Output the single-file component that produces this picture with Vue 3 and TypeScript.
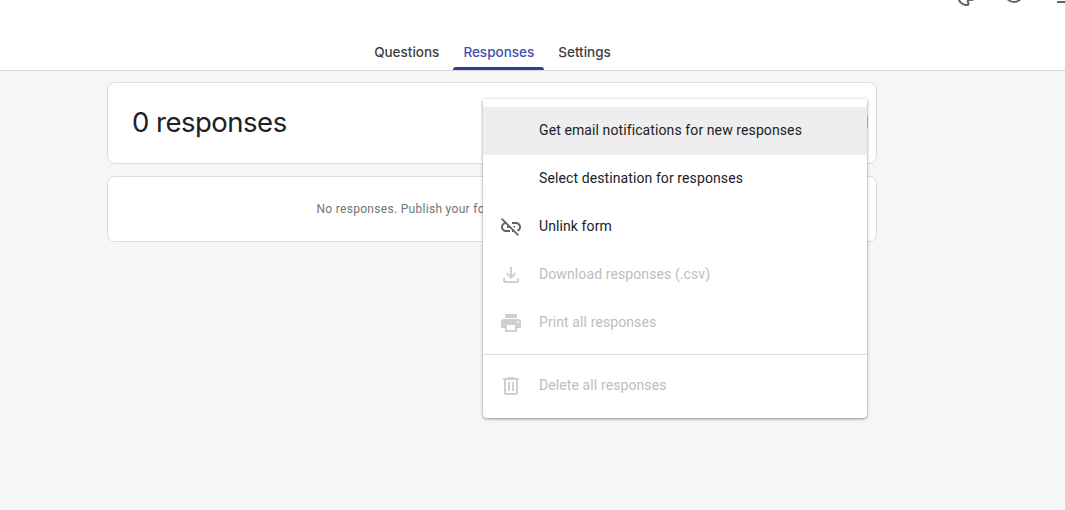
<script setup lang="ts">
const tabs = [
  { label: 'Questions', active: false },
  { label: 'Responses', active: true },
  { label: 'Settings', active: false },
];

const linkOff =
  'M17 7h-4v1.9h4c1.71 0 3.1 1.39 3.1 3.1 0 1.43-.98 2.63-2.31 2.98l1.46 1.46C20.88 15.61 22 13.95 22 12c0-2.76-2.24-5-5-5zm-1 4h-2.19l2 2H16zM2 4.27l3.11 3.11C3.29 8.12 2 9.91 2 12c0 2.76 2.24 5 5 5h4v-1.9H7c-1.71 0-3.1-1.39-3.1-3.1 0-1.59 1.21-2.9 2.76-3.07L8.73 11H8v2h2.73L13 15.27V17h1.73l4.01 4L20 19.74 3.27 3 2 4.27z';
const download =
  'M18 15v3H6v-3H4v3c0 1.1.9 2 2 2h12c1.1 0 2-.9 2-2v-3h-2zm-1-4l-1.41-1.41L13 12.17V4h-2v8.17L8.41 9.59 7 11l5 5 5-5z';
const print =
  'M19 8H5c-1.66 0-3 1.34-3 3v6h4v4h12v-4h4v-6c0-1.66-1.34-3-3-3zm-3 11H8v-5h8v5zm3-7c-.55 0-1-.45-1-1s.45-1 1-1 1 .45 1 1-.45 1-1 1zm-1-9H6v4h12V3z';
const trash =
  'M15 4V3H9v1H4v2h1v13c0 1.1.9 2 2 2h10c1.1 0 2-.9 2-2V6h1V4h-5zm2 15H7V6h10v13zM9 8h2v9H9zm4 0h2v9h-2z';

const menuTop = [
  { label: 'Get email notifications for new responses', icon: '', disabled: false, hover: true },
  { label: 'Select destination for responses', icon: '', disabled: false, hover: false },
  { label: 'Unlink form', icon: linkOff, disabled: false, hover: false },
  { label: 'Download responses (.csv)', icon: download, disabled: true, hover: false },
  { label: 'Print all responses', icon: print, disabled: true, hover: false },
];
</script>

<template>
  <div class="page">
    <header class="header">
      <div class="top-icons">
        <svg class="palette" viewBox="0 0 24 24" width="24" height="24">
          <path d="M12 22C6.49 22 2 17.51 2 12S6.49 2 12 2s10 4.04 10 9c0 3.31-2.69 6-6 6h-1.77c-.28 0-.5.22-.5.5 0 .12.05.23.13.33.41.47.64 1.06.64 1.67A2.5 2.5 0 0 1 12 22zm0-18c-4.41 0-8 3.59-8 8s3.59 8 8 8c.28 0 .5-.22.5-.5a.54.54 0 0 0-.14-.35c-.41-.46-.63-1.05-.63-1.65a2.5 2.5 0 0 1 2.5-2.5H16c2.21 0 4-1.79 4-4 0-3.86-3.59-7-8-7z" />
        </svg>
        <span class="circle"></span>
        <span class="dash"></span>
      </div>
      <nav class="tabs">
        <a v-for="tab in tabs" :key="tab.label" class="tab" :class="{ active: tab.active }">{{ tab.label }}</a>
      </nav>
    </header>

    <main class="content">
      <section class="card summary">
        <h1>0 responses</h1>
        <span class="more-sliver"></span>
      </section>
      <section class="card empty">
        <p>No responses. Publish your form to start accepting responses.</p>
      </section>

      <div class="menu">
        <div
          v-for="item in menuTop"
          :key="item.label"
          class="menu-item"
          :class="{ disabled: item.disabled, hover: item.hover }"
        >
          <span class="menu-icon">
            <svg v-if="item.icon" viewBox="0 0 24 24" width="24" height="24"><path :d="item.icon" /></svg>
          </span>
          <span class="menu-label">{{ item.label }}</span>
        </div>
        <div class="menu-divider"></div>
        <div class="menu-item disabled">
          <span class="menu-icon">
            <svg viewBox="0 0 24 24" width="24" height="24"><path :d="trash" /></svg>
          </span>
          <span class="menu-label">Delete all responses</span>
        </div>
      </div>
    </main>
  </div>
</template>

<style scoped>
.page {
  height: 510px;
  overflow: hidden;
  background: #f6f6f6;
  font-family: Roboto, "Liberation Sans", sans-serif;
}

.header {
  height: 70px;
  background: #fff;
  border-bottom: 1px solid #dadada;
  display: flex;
  flex-direction: column;
  justify-content: space-between;
}

.top-icons {
  height: 8px;
  overflow: hidden;
  display: flex;
  align-items: flex-end;
  padding-left: 955px;
}

.palette {
  flex: none;
  fill: #5f6368;
}

.circle {
  flex: none;
  width: 20px;
  height: 20px;
  box-sizing: border-box;
  border: 2px solid #5f6368;
  border-radius: 50%;
  margin-left: 25px;
  margin-bottom: 5px;
}

.dash {
  flex: none;
  width: 8px;
  height: 2px;
  background: #5f6368;
  margin-left: 33px;
  margin-bottom: 5px;
}

.tabs {
  width: 985px;
  display: flex;
  justify-content: center;
  gap: 4px;
}

.tab {
  position: relative;
  height: 37px;
  padding: 0 10px;
  box-sizing: border-box;
  font-family: Inter, "Open Sans", sans-serif;
  font-size: 13.5px;
  font-weight: 500;
  line-height: 39px;
  color: #3c4043;
}

.tab.active {
  color: #3f51a8;
}

/* indicator bar under the selected tab */
.tab.active::after {
  content: "";
  position: absolute;
  left: 0;
  right: 0;
  bottom: 0;
  height: 3px;
  background: #2f3e8f;
  border-radius: 3px 3px 0 0;
}

.content {
  position: relative;
  width: 770px;
  margin-left: 107px;
  padding-top: 11px;
  display: flex;
  flex-direction: column;
  gap: 12px;
}

.card {
  box-sizing: border-box;
  background: #fff;
  border: 1px solid #dadce0;
  border-radius: 8px;
}

.summary {
  height: 82px;
  padding: 0 24px 2px;
  display: flex;
  align-items: center;
  justify-content: space-between;
}

.summary h1 {
  margin: 0;
  font-family: Inter, "Open Sans", sans-serif;
  font-size: 27.5px;
  font-weight: 400;
  letter-spacing: -0.5px;
  color: #202124;
}

.more-sliver {
  width: 2px;
  height: 12px;
  margin-right: -16px;
  background: #c4c4c4;
}

.empty {
  height: 66px;
  display: flex;
  align-items: center;
  justify-content: center;
}

.empty p {
  margin: 0;
  font-size: 12px;
  letter-spacing: 0.3px;
  color: #70757a;
}

/* open "more" menu, sits over the cards */
.menu {
  position: absolute;
  top: 28px;
  left: 376px;
  width: 384px;
  padding: 8px 0;
  background: #fff;
  border-radius: 0 0 4px 4px;
  box-shadow: 0 1px 3px rgba(0, 0, 0, 0.4), 0 0 5px rgba(0, 0, 0, 0.06);
}

.menu-item {
  height: 48px;
  padding-left: 16px;
  display: flex;
  align-items: center;
  gap: 16px;
  font-size: 14px;
  letter-spacing: 0.1px;
  color: #202124;
}

.menu-label {
  padding-bottom: 2px;
}

.menu-item.hover {
  background: #eeeeee;
}

.menu-item.disabled {
  color: #bdbdbd;
}

.menu-icon {
  width: 24px;
  height: 24px;
  flex: none;
  fill: #5f6368;
}

.menu-item.disabled .menu-icon {
  fill: #cfcfcf;
}

.menu-divider {
  height: 1px;
  margin: 7px 0;
  background: #dadce0;
}
</style>
